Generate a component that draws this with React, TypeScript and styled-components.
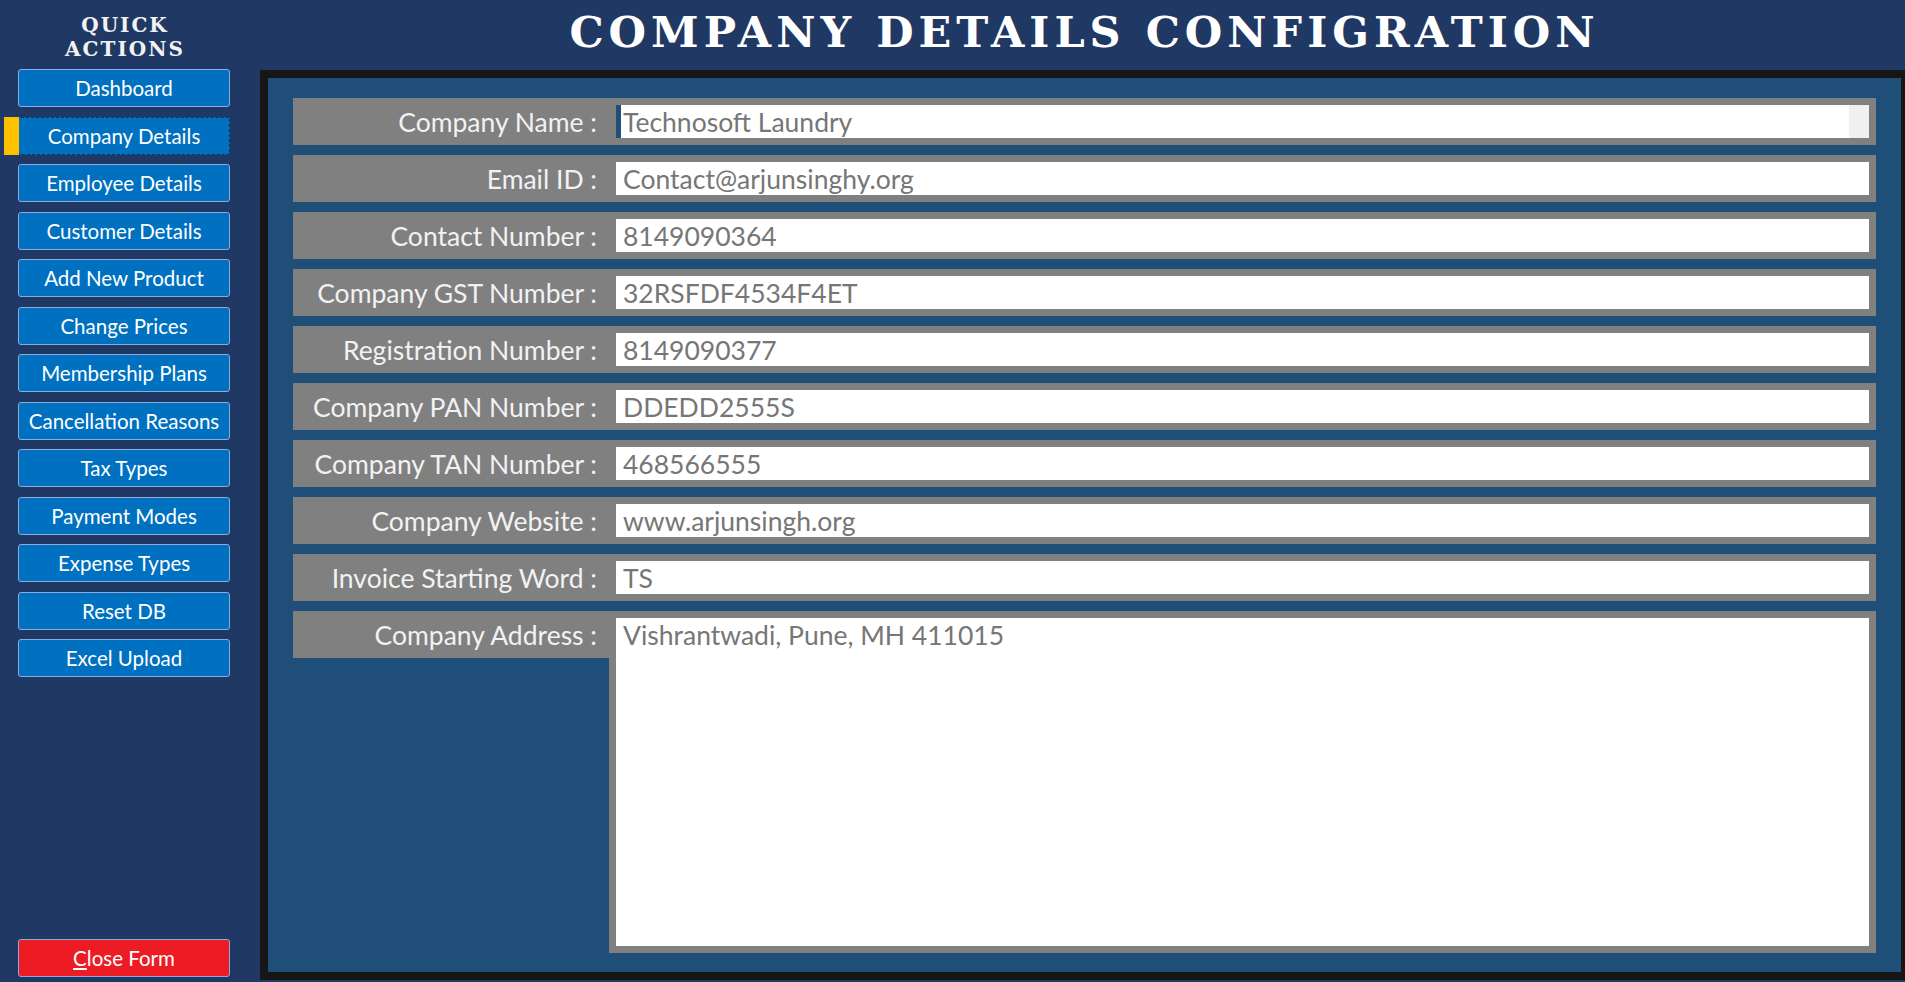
import styled, { createGlobalStyle } from "styled-components";

// menu entries of the left column
const menu = [
  "Dashboard",
  "Company Details",
  "Employee Details",
  "Customer Details",
  "Add New Product",
  "Change Prices",
  "Membership Plans",
  "Cancellation Reasons",
  "Tax Types",
  "Payment Modes",
  "Expense Types",
  "Reset DB",
  "Excel Upload",
];

const fields = [
  { label: "Company Name :", value: "Technosoft Laundry", focus: true },
  { label: "Email ID :", value: "Contact@arjunsinghy.org" },
  { label: "Contact Number :", value: "8149090364" },
  { label: "Company GST Number :", value: "32RSFDF4534F4ET" },
  { label: "Registration Number :", value: "8149090377" },
  { label: "Company PAN Number :", value: "DDEDD2555S" },
  { label: "Company TAN Number :", value: "468566555" },
  { label: "Company Website :", value: "www.arjunsingh.org" },
  { label: "Invoice Starting Word :", value: "TS" },
];

function App() {
  return (
    <>
      <GlobalStyle />
      <Page>
        <Sidebar>
          <SideTitle>
            Quick
            <br />
            Actions
          </SideTitle>
          <Menu>
            {menu.map((m) => (
              <MenuItem key={m}>
                {m === "Company Details" && <ActiveMark />}
                <MenuButton active={m === "Company Details"}>{m}</MenuButton>
              </MenuItem>
            ))}
          </Menu>
          <CloseButton>
            <u>C</u>lose Form
          </CloseButton>
        </Sidebar>

        <Main>
          <Title>Company Details Configration</Title>
          <Panel>
            {fields.map((f) => (
              <Row key={f.label}>
                <Label>{f.label}</Label>
                <Frame>
                  <Input focus={f.focus}>
                    {f.value}
                    {f.focus && <ScrollStub />}
                  </Input>
                </Frame>
              </Row>
            ))}
            <Row grow>
              <Label>Company Address :</Label>
              <Frame grow>
                <TextArea>Vishrantwadi, Pune, MH 411015</TextArea>
              </Frame>
            </Row>
          </Panel>
        </Main>
      </Page>
    </>
  );
}

//CSS
const GlobalStyle = createGlobalStyle`
  html, body {
    margin: 0;
    padding: 0;
    height: 100%;
    overflow: hidden;
    background: #203864;
  }
  #root {
    height: 100%;
  }
`;

const Page = styled.div`
  display: grid;
  grid-template-columns: 260px 1fr;
  height: 982px;
  background: #203864;
  font-family: Lato, "Open Sans", sans-serif;
`;

const Sidebar = styled.aside`
  display: flex;
  flex-direction: column;
  padding: 13px 0 5px 0;
`;

const SideTitle = styled.div`
  width: 250px;
  text-align: center;
  font-family: "DejaVu Serif", serif;
  font-weight: 700;
  font-size: 20px;
  line-height: 24px;
  letter-spacing: 2px;
  text-transform: uppercase;
  color: #f2f2f2;
`;

const Menu = styled.nav`
  display: flex;
  flex-direction: column;
  gap: 9.5px;
  margin-top: 8px;
`;

const MenuItem = styled.div`
  position: relative;
  padding-left: 18px;
`;

const ActiveMark = styled.span`
  position: absolute;
  left: 4px;
  top: 0;
  width: 15px;
  height: 38px;
  background: #ffc000;
`;

const MenuButton = styled.button<{ active?: boolean }>`
  display: block;
  width: 212px;
  height: 38px;
  padding: 0;
  border-radius: 3px;
  border: 1px ${(p) => (p.active ? "dashed #1b2f52" : "solid #8eaadb")};
  background: #0070c0;
  color: #ffffff;
  font-family: Lato, "Open Sans", sans-serif;
  font-size: 20.5px;
  white-space: nowrap;
  cursor: pointer;
`;

const CloseButton = styled(MenuButton)`
  margin: auto 0 0 18px;
  background: #ed1c24;
  border: 1px solid #8eaadb;
`;

const Main = styled.main`
  display: flex;
  flex-direction: column;
  margin-right: -4px;
  padding-bottom: 2px;
  min-width: 0;
`;

const Title = styled.h1`
  margin: 0;
  height: 70px;
  display: flex;
  align-items: center;
  justify-content: center;
  font-family: "DejaVu Serif", serif;
  font-weight: 700;
  font-size: 43px;
  letter-spacing: 5px;
  text-transform: uppercase;
  color: #ffffff;
  padding-bottom: 6px;
  box-sizing: border-box;
`;

const Panel = styled.section`
  flex: 1;
  display: flex;
  flex-direction: column;
  gap: 10px;
  padding: 20px 25px 19px 25px;
  border: 8px solid #161616;
  background: #1f4e79;
`;

const Row = styled.div<{ grow?: boolean }>`
  display: flex;
  align-items: flex-start;
  flex: ${(p) => (p.grow ? 1 : "none")};
`;

const Label = styled.div`
  width: 316px;
  height: 47px;
  flex: none;
  box-sizing: border-box;
  padding-right: 12px;
  display: flex;
  align-items: center;
  justify-content: flex-end;
  background: #808080;
  color: #f2f2f2;
  font-size: 26.5px;
  white-space: nowrap;
`;

const Frame = styled.div<{ grow?: boolean }>`
  flex: 1;
  align-self: ${(p) => (p.grow ? "stretch" : "auto")};
  display: flex;
  padding: 7px;
  background: #808080;
`;

const Input = styled.div<{ focus?: boolean }>`
  position: relative;
  flex: 1;
  height: 33px;
  box-sizing: border-box;
  display: flex;
  align-items: center;
  padding-left: ${(p) => (p.focus ? "2px" : "7px")};
  border-left: ${(p) => (p.focus ? "5px solid #1f4e79" : "none")};
  background: #ffffff;
  color: #767676;
  font-size: 26.5px;
  white-space: nowrap;
`;

const ScrollStub = styled.span`
  position: absolute;
  right: 0;
  top: 0;
  width: 20px;
  height: 100%;
  background: #f0f0f0;
`;

const TextArea = styled.div`
  flex: 1;
  padding: 0 7px;
  background: #ffffff;
  color: #767676;
  font-size: 26.5px;
  line-height: 34px;
`;

export default App;
